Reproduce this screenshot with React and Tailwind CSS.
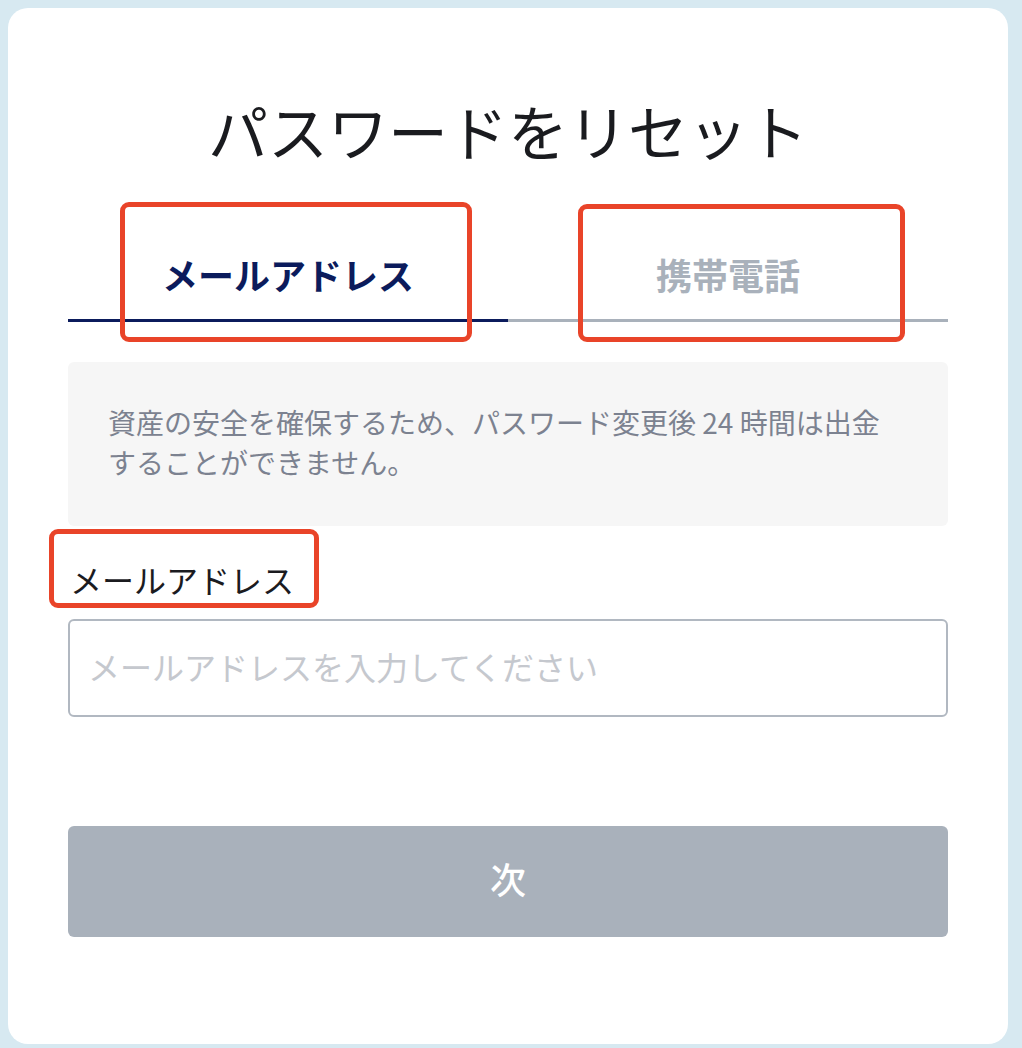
export default function App() {
  const font = { fontFamily: '"Noto Sans CJK JP", "Noto Sans", sans-serif' };
  return (
    <div className="relative min-h-screen w-[1022px] h-[1048px] bg-[#d7e9f1] p-[8px]" style={font}>
      <div className="w-[1000px] h-[1036px] rounded-[20px] bg-white px-[60px] pt-[82px]">
        <h1 className="text-center text-[60px] leading-[80px] font-normal text-[#1a1b1f]">
          パスワードをリセット
        </h1>
        <div className="mt-[62px] flex">
          <div className="flex-1 h-[90px] border-b-[3px] border-[#0b1b5c] flex items-center justify-center pb-[4px]">
            <span className="text-[36px] font-semibold text-[#0b1b5c] leading-none">メールアドレス</span>
          </div>
          <div className="flex-1 h-[90px] border-b-[3px] border-[#a9b1bb] flex items-center justify-center pb-[4px]">
            <span className="text-[36px] font-semibold text-[#a9b1bb] leading-none">携帯電話</span>
          </div>
        </div>
        <div className="mt-[40px] h-[164px] rounded-[6px] bg-[#f6f6f6] pl-[40px] pr-[30px] pt-[40px]">
          <p className="text-[28px] leading-[40px] text-[#7c8290]">
            資産の安全を確保するため、パスワード変更後 24 時間は出金
            <br />
            することができません。
          </p>
        </div>
        <div className="mt-[33px] pl-[2px] text-[32px] leading-[40px] text-[#1b1b1f]">メールアドレス</div>
        <div className="mt-[20px] h-[98px] rounded-[6px] border-2 border-[#b1b8c1] flex items-center pl-[18px] pb-[4px]">
          <span className="text-[32px] text-[#c5c8ce] leading-none">メールアドレスを入力してください</span>
        </div>
        <button className="mt-[109px] w-full h-[111px] rounded-[6px] bg-[#a9b1bb] flex items-center justify-center text-white text-[36px] font-medium leading-none pb-[8px]">
          次
        </button>
      </div>
      <div className="absolute left-[120px] top-[202px] w-[352px] h-[140px] border-[5px] border-[#e94429] rounded-[9px]" />
      <div className="absolute left-[578px] top-[204px] w-[327px] h-[138px] border-[5px] border-[#e94429] rounded-[9px]" />
      <div className="absolute left-[49px] top-[529px] w-[270px] h-[79px] border-[5px] border-[#e94429] rounded-[9px]" />
    </div>
  );
}
